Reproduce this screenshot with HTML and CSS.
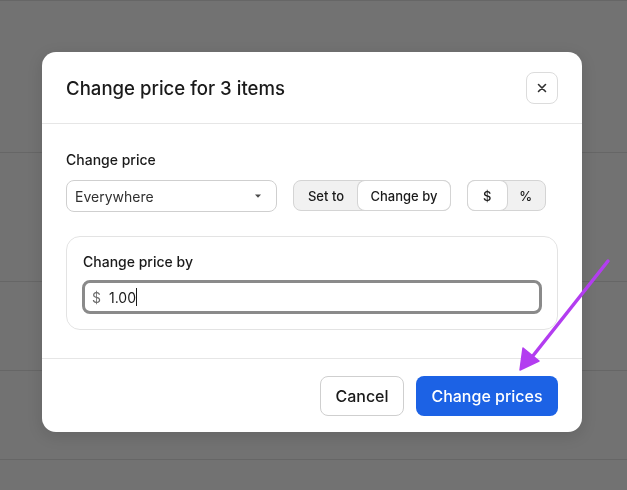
FILE: index.html
```html
<!DOCTYPE html>
<html lang="en">
<head>
    <meta charset="UTF-8">
    <title>Change price</title>
    <link rel="stylesheet" href="styles.css">
</head>
<body>
    <!-- page behind the overlay -->
    <div class="page-rows">
        <div class="page-row row-1"></div>
        <div class="page-row row-2"></div>
        <div class="page-row row-3"></div>
        <div class="page-row row-4"></div>
    </div>

    <div class="overlay">
        <div class="modal">
            <div class="modal-header">
                <h2 class="modal-title">Change price for 3 items</h2>
                <button class="close-button" aria-label="Close">
                    <svg width="12" height="12" viewBox="0 0 12 12">
                        <path d="M2.5 2.5 L9.5 9.5 M9.5 2.5 L2.5 9.5" stroke="#303030" stroke-width="1.6" stroke-linecap="round"/>
                    </svg>
                </button>
            </div>

            <div class="modal-body">
                <div class="field-label">Change price</div>
                <div class="controls">
                    <div class="select">
                        <span>Everywhere</span>
                        <svg class="caret" width="10" height="6" viewBox="0 0 10 6">
                            <path d="M2 1.5 H8 L5 4.8 Z" fill="#4a4a4a"/>
                        </svg>
                    </div>

                    <div class="segmented seg-mode">
                        <div class="seg-item">Set to</div>
                        <div class="seg-item active">Change by</div>
                    </div>

                    <div class="segmented seg-unit">
                        <div class="seg-item active">$</div>
                        <div class="seg-item">%</div>
                    </div>
                </div>

                <div class="card">
                    <div class="card-label">Change price by</div>
                    <div class="text-input">
                        <span class="prefix">$</span>
                        <span class="value">1.00</span><span class="cursor"></span>
                    </div>
                </div>
            </div>

            <div class="modal-footer">
                <button class="btn btn-secondary">Cancel</button>
                <button class="btn btn-primary">Change prices</button>
            </div>
        </div>
    </div>

    <!-- annotation arrow -->
    <svg class="arrow" width="627" height="490" viewBox="0 0 627 490">
        <line x1="608" y1="261" x2="532" y2="357" stroke="#b33df0" stroke-width="3.5" stroke-linecap="round"/>
        <path d="M520 370 L523 348 L539 361 Z" fill="#b33df0" stroke="#b33df0" stroke-width="1.5" stroke-linejoin="round"/>
    </svg>
</body>
</html>
```

FILE: styles.css
```css
* {
    margin: 0;
    padding: 0;
    box-sizing: border-box;
}

body {
    font-family: Inter, 'Noto Sans', sans-serif;
    background: #727272;
    width: 627px;
    height: 490px;
    overflow: hidden;
    color: #303030;
}

.page-rows {
    border-top: 1px solid #666;
}

.page-row {
    border-bottom: 1px solid #666;
}

.row-1 { height: 152px; }
.row-2 { height: 129px; }
.row-3 { height: 89px; }
.row-4 { height: 89px; }

.overlay {
    position: fixed;
    inset: 0;
    display: flex;
    justify-content: center;
    align-items: flex-start;
    padding: 52px 0 0 0;
}

.modal {
    width: 540px;
    background: #fff;
    border-radius: 14px;
    box-shadow: 0 4px 16px rgba(0, 0, 0, 0.12);
    overflow: hidden;
    margin-left: -3px;
}

.modal-header {
    height: 72px;
    display: flex;
    align-items: center;
    justify-content: space-between;
    padding: 0 24px;
    border-bottom: 1px solid #e6e6e6;
}

.modal-title {
    font-size: 18.6px;
    font-weight: 500;
    color: #1a1a1a;
}

.close-button {
    width: 32px;
    height: 32px;
    border: 1px solid #dcdcdc;
    border-radius: 8px;
    background: #fff;
    display: flex;
    align-items: center;
    justify-content: center;
}

.modal-body {
    padding: 26px 24px 28px 24px;
}

.field-label {
    font-size: 14px;
    font-weight: 500;
    line-height: 20px;
    color: #1a1a1a;
    margin-bottom: 10px;
}

.controls {
    display: flex;
    align-items: flex-start;
    gap: 16px;
    margin-bottom: 24px;
}

.select {
    width: 211px;
    height: 32px;
    border: 1px solid #cfcfcf;
    border-radius: 8px;
    display: flex;
    align-items: center;
    justify-content: space-between;
    padding: 0 13px 0 8px;
    font-size: 14px;
    color: #303030;
}

.segmented {
    display: flex;
    height: 31px;
    background: #f1f1f1;
    border: 1px solid #d4d4d4;
    border-radius: 8px;
    font-size: 13px;
    font-weight: 500;
    color: #1a1a1a;
}

.seg-item {
    display: flex;
    align-items: center;
    justify-content: center;
    border-radius: 7px;
}

.seg-item.active {
    background: #fff;
    box-shadow: 0 0 0 1px #d4d4d4;
}

.seg-mode { width: 158px; }
.seg-mode .seg-item:first-child { width: 64px; }
.seg-mode .seg-item:last-child { flex: 1; }

.seg-unit { width: 79px; }
.seg-unit .seg-item { flex: 1; }

.card {
    border: 1px solid #e3e3e3;
    border-radius: 14px;
    padding: 15px;
}

.card-label {
    font-size: 14px;
    font-weight: 500;
    line-height: 20px;
    color: #1a1a1a;
    margin-bottom: 8px;
    padding-left: 1px;
}

.text-input {
    height: 34px;
    border: 3px solid #8a8a8a;
    border-radius: 8px;
    display: flex;
    align-items: center;
    padding: 0 7px;
    font-size: 14px;
}

.prefix {
    color: #6b6b6b;
    margin-right: 8px;
}

.value {
    color: #1a1a1a;
}

.cursor {
    display: inline-block;
    width: 1px;
    height: 18px;
    background: #1a1a1a;
}

.modal-footer {
    border-top: 1px solid #e6e6e6;
    display: flex;
    justify-content: flex-end;
    gap: 12px;
    padding: 17px 24px 16px 24px;
}

.btn {
    height: 40px;
    border-radius: 8px;
    font-family: inherit;
    font-size: 16px;
    font-weight: 500;
    padding: 0;
    white-space: nowrap;
}

.btn-secondary {
    background: #fff;
    border: 1px solid #cfcfcf;
    color: #1a1a1a;
    width: 84px;
}

.btn-primary {
    background: #1c62e5;
    border: none;
    color: #fff;
    width: 142px;
}

.arrow {
    position: fixed;
    top: 0;
    left: 0;
    pointer-events: none;
}
```
